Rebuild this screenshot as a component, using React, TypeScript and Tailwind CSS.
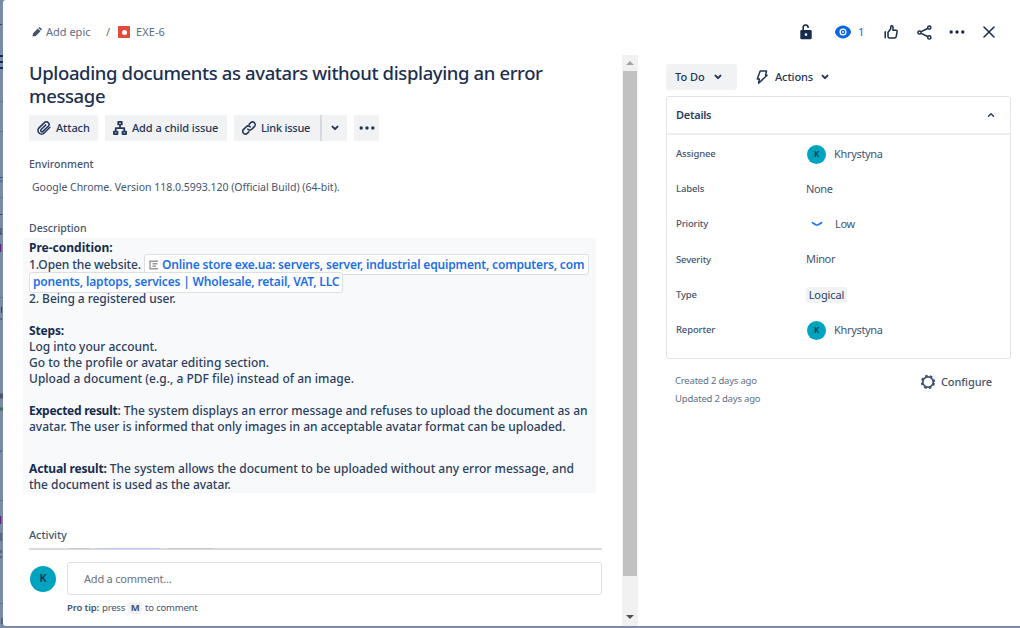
import React from 'react';

const Chevron = ({ className = '', up = false, w = 2 }: { className?: string; up?: boolean; w?: number }) => (
  <svg viewBox="0 0 8 6" className={`h-[6px] w-[8px] shrink-0 ${className}`} fill="none" stroke="currentColor" strokeWidth={w} strokeLinecap="round" strokeLinejoin="round">
    <path d={up ? 'M1.5 4.3 4 1.8 6.5 4.3' : 'M1.5 1.6 4 4.1 6.5 1.6'} />
  </svg>
);

const Dots = () => (
  <svg viewBox="0 0 16 4" className="h-[4px] w-[16px] shrink-0" fill="currentColor">
    <circle cx="2.2" cy="2" r="1.7" />
    <circle cx="8" cy="2" r="1.7" />
    <circle cx="13.8" cy="2" r="1.7" />
  </svg>
);

const Pencil = () => (
  <svg viewBox="0 0 10 10" className="h-[10px] w-[10px] shrink-0" fill="currentColor">
    <path d="M.4 9.6 1.1 6.2 5.8 1.5 8.5 4.2 3.8 8.900zM6.400 1 7 .5q.7-.6 1.300 0l1.200 1.200q.6.600 0 1.300l-.5.600z" />
  </svg>
);

const Clip = () => (
  <svg viewBox="0 0 14 14" className="h-[14px] w-[14px] shrink-0" fill="none" stroke="currentColor" strokeWidth="1.5" strokeLinecap="round">
    <path d="M12.900 6.300 7.200 12a3.600 3.600 0 0 1-5.200-5.100L7.400 1.600a2.600 2.600 0 0 1 3.800 3.700L6 10.400a1.300 1.300 0 0 1-1.900-1.900L8.600 4.100" />
  </svg>
);

const Tree = () => (
  <svg viewBox="0 0 14 14" className="h-[14px] w-[14px] shrink-0" fill="none" stroke="currentColor" strokeWidth="1.700" strokeLinejoin="round">
    <path d="M5.200.9h3.600v2.600H5.200zM.9 10.600h3.600v2.500H.9zM9.500 10.600h3.600v2.500H9.500zM7 3.500V7M2.700 10.600V7.200h8.600v3.400" />
  </svg>
);

const LinkIcon = () => (
  <svg viewBox="0 0 14 14" className="h-[14px] w-[14px] shrink-0" fill="none" stroke="currentColor" strokeWidth="1.600" strokeLinecap="round">
    <path d="M5.900 8.200a2.600 2.600 0 0 0 3.800.1l2.700-2.700a2.600 2.600 0 0 0-3.800-3.800L7.200 3.100M8.100 5.800a2.600 2.600 0 0 0-3.800-.1L1.600 8.400a2.600 2.600 0 0 0 3.800 3.800l1.400-1.300" />
  </svg>
);

const Lock = () => (
  <svg viewBox="0 0 12 16" className="h-[16px] w-[12px] shrink-0">
    <path d="M3.200 7V3.700a2.400 2.400 0 0 1 4.900-.5v.9" fill="none" stroke="currentColor" strokeWidth="1.600" />
    <path fill="currentColor" fillRule="evenodd" d="M1.500 6h9A1.200 1.200 0 0 1 11.700 7.200v6.900a1.200 1.200 0 0 1-1.200 1.200h-9A1.200 1.200 0 0 1 .3 14.100V7.200A1.200 1.200 0 0 1 1.500 6zM6 9.300a1.300 1.300 0 1 0 0 2.600 1.300 1.300 0 0 0 0-2.600z" />
  </svg>
);

const Eye = () => (
  <svg viewBox="0 0 16 14" className="h-[14px] w-[16px] shrink-0">
    <path fill="currentColor" d="M8 .6c4.600 0 8 4 8 6.400s-3.400 6.400-8 6.400S0 9.400 0 7 3.400.6 8 .6z" />
    <circle cx="8" cy="7" r="2.900" fill="none" stroke="#fff" strokeWidth="1.300" />
    <circle cx="8" cy="7" r="0.900" fill="#fff" />
  </svg>
);

const Thumb = () => (
  <svg viewBox="0 0 14 14" className="h-[14px] w-[14px] shrink-0" fill="none" stroke="currentColor" strokeWidth="1.500" strokeLinejoin="round" strokeLinecap="round">
    <path d="M1.200 6.800v6M4 7.200 6.700 4V2q0-1.200 1-1.200 1.300 0 1.300 1.500V5.200h2.800q1.500 0 1.300 1.400l-.9 4.900q-.3 1.400-1.600 1.400H5.300Q4 12.900 4 11.600z" />
  </svg>
);

const Share = () => (
  <svg viewBox="0 0 15 15" className="h-[15px] w-[15px] shrink-0" fill="none" stroke="currentColor" strokeWidth="1.500">
    <circle cx="2.500" cy="7.500" r="1.600" />
    <circle cx="12.300" cy="2.600" r="1.600" />
    <circle cx="12.300" cy="12.400" r="1.600" />
    <path d="m4.200 6.700 6.400-3.200M4.200 8.300l6.400 3.200" />
  </svg>
);

const Bolt = () => (
  <svg viewBox="0 0 12 14" className="h-[14px] w-[12px] shrink-0" fill="none" stroke="currentColor" strokeWidth="1.500" strokeLinejoin="round">
    <path d="M4.200 1h6.300L9.600 5.200h1.500L2.600 13.200l.8-4.200H1.300z" />
  </svg>
);

const Gear = () => (
  <svg viewBox="0 0 16 16" className="h-[16px] w-[16px] shrink-0" fill="none" stroke="currentColor">
    <circle cx="8" cy="8" r="5.200" strokeWidth="1.700" />
    <circle cx="8" cy="8" r="6.200" strokeWidth="1.900" strokeDasharray="2.600 2.270" strokeDashoffset="-1.130" />
  </svg>
);

const Avatar = ({ big = false }: { big?: boolean }) => (
  <div className={`flex shrink-0 items-center justify-center rounded-full bg-[#00a3bf] font-semibold text-[#172b4d] ${big ? 'h-[26px] w-[26px] text-[11px]' : 'h-[19px] w-[19px] text-[8px]'}`}>K</div>
);

const Field = ({ label, children }: { label: string; children: React.ReactNode }) => (
  <div className="flex h-[35.200px] items-center">
    <div className="w-[130px] text-[9.500px] font-medium tracking-[-0.15px] text-[#44546f]">{label}</div>
    <div className="flex items-center text-[11px] tracking-[-0.03em] text-[#44546f]">{children}</div>
  </div>
);

const Line = ({ className = '', children }: { className?: string; children?: React.ReactNode }) => (
  <div className={`h-[16px] leading-[16px] ${className}`}>{children}</div>
);

// Sliver of the dimmed board that stays visible beside the dialog.
const Backdrop = () => (
  <svg viewBox="0 0 3 628" className="h-[628px] w-[3px] shrink-0" fill="none">
    <path d="M0 101.500h3M0 131.500h3M0 197.500h3M0 297.500h3M0 500.500h3M0 603.500h3" stroke="#68778f" />
    <path d="M0 56h3M0 62h3M0 68h3" stroke="#172b4d" strokeWidth="1.800" />
    <path d="M0 177.500h2.500M0 181h2.500M0 451h2" stroke="#2d5590" />
    <path d="M0 24.500h2M0 214.500h2M1 228v6M0 234h2M1.500 307v6M0 319h2M1 533v8M1 550v3M0 557h2M2 618v6" stroke="#34435f" />
    <path d="M.5 244v8M.5 516v8" stroke="#65267f" strokeWidth="1.500" />
    <path d="M0 396h3" stroke="#4b5667" strokeWidth="5" />
    <path d="M0 409h3" stroke="#3c6f5c" strokeWidth="3" />
  </svg>
);

export default function App() {
  return (
    <div className="flex h-[628px] w-[1020px] overflow-hidden bg-[#7a8ba5] font-['Noto_Sans','Open_Sans',sans-serif] whitespace-nowrap text-[#172b4d]">
      <Backdrop />
      <div className="flex h-[626px] w-[1017px] flex-col rounded-l-[3px] bg-white">
        <header className="flex h-[55px] shrink-0 items-center justify-between pt-[9px] pr-[25px] pl-[29px] text-[11px] text-[#5e6c84]">
          <div className="flex items-center">
            <span className="text-[#44546f]"><Pencil /></span>
            <span className="ml-[4px] w-[60px]">Add epic</span>
            <span className="w-[12px]">/</span>
            <span className="flex h-[12px] w-[12px] items-center justify-center rounded-[1px] bg-[#e5493a]"><span className="h-[5px] w-[5px] rounded-full bg-white" /></span>
            <span className="ml-[6px] tracking-[0.1px]">EXE-6</span>
          </div>
          <div className="flex items-center text-[#172b4d]">
            <Lock />
            <span className="ml-[23px] flex items-center gap-[7px] text-[#0c66e4]"><Eye /><span className="w-[6px]">1</span></span>
            <span className="ml-[20px]"><Thumb /></span>
            <span className="ml-[19px]"><Share /></span>
            <span className="ml-[17px]"><Dots /></span>
            <svg viewBox="0 0 12 12" className="ml-[18px] h-[12px] w-[12px]" fill="none" stroke="currentColor" strokeWidth="1.500" strokeLinecap="round"><path d="m1 1 10 10M11 1 1 11" /></svg>
          </div>
        </header>
        <div className="flex h-[571px]">
          <main className="flex w-[619px] shrink-0 flex-col pl-[26px]">
            <h1 className="mt-[6px] text-[18.500px] leading-[23px] font-medium tracking-[-0.38px] text-[#1d3050]">
              <div>Uploading documents as avatars without displaying an error</div>
              <div>message</div>
            </h1>
            <div className="mt-[8px] flex h-[26px] text-[11px] font-medium tracking-[-0.08px] text-[#22365a]">
              <button className="flex w-[69px] items-center gap-[5px] rounded-[2px] bg-[#f1f2f4] pl-[8px]"><Clip />Attach</button>
              <button className="ml-[7px] flex w-[122px] items-center gap-[5px] rounded-[2px] bg-[#f1f2f4] pl-[8px]"><Tree />Add a child issue</button>
              <button className="ml-[7px] flex w-[86px] items-center gap-[5px] rounded-l-[2px] bg-[#f1f2f4] pl-[8px]"><LinkIcon /><span className="tracking-[-0.25px]">Link issue</span></button>
              <button className="flex w-[27px] items-center justify-center rounded-r-[2px] border-l-2 border-[#d5d9e0] bg-[#f1f2f4]"><Chevron /></button>
              <button className="ml-[7px] flex w-[25px] items-center justify-center rounded-[2px] bg-[#f1f2f4]"><Dots /></button>
            </div>
            <div className="mt-[15px] h-[16px] text-[10.500px] leading-[16px] font-medium text-[#44546f]">Environment</div>
            <div className="mt-[7px] h-[16px] pl-[3px] text-[10.500px] leading-[16px] tracking-[-0.02px] text-[#44546f]">Google Chrome. Version 118.0.5993.120 (Official Build) (64-bit).</div>
            <div className="mt-[25px] h-[16px] text-[10.500px] leading-[16px] font-medium text-[#44546f]">Description</div>
            <section className="mt-[2px] -ml-[6px] h-[255px] w-[573px] bg-[#f8f9fb] pt-[2px] pl-[6px] text-[12px] font-medium text-[#2c3e5d]">
              <Line className="font-bold text-[#172b4d]">Pre-condition:</Line>
              <div className="flex h-[17px] items-center">
                <span className="w-[115px] tracking-[-0.1px]">1.Open the website.</span>
                <a className="flex h-[21px] w-[445px] shrink-0 items-center rounded-[3px] border border-[#dcdfe4] bg-white pl-[4px] font-semibold tracking-[-0.17px] text-[#1d6fe8]">
                  <svg viewBox="0 0 10 10" className="mr-[3px] h-[10px] w-[10px] shrink-0" fill="none" stroke="#9a9a9a" strokeWidth="1.400"><path d="M9 1.200H1v7.600h8M3.500 3.800h5M3.500 6.300h3.500" /></svg>
                  Online store exe.ua: servers, server, industrial equipment, computers, com
                </a>
              </div>
              <div className="flex h-[18px] items-center">
                <a className="flex h-[21px] w-[314px] shrink-0 items-center rounded-[3px] border border-[#dcdfe4] bg-white pl-[3px] font-semibold tracking-[-0.17px] text-[#1d6fe8]">ponents, laptops, services | Wholesale, retail, VAT, LLC</a>
              </div>
              <Line className="tracking-[-0.05px]">2. Being a registered user.</Line>
              <Line className="mt-[16px] font-bold tracking-[-0.15px] text-[#172b4d]">Steps:</Line>
              <Line>Log into your account.</Line>
              <Line>Go to the profile or avatar editing section.</Line>
              <Line className="tracking-[0.02px]">Upload a document (e.g., a PDF file) instead of an image.</Line>
              <Line className="mt-[16px]"><b className="font-bold tracking-[-0.28px] text-[#172b4d]">Expected result</b>: The system displays an error message and refuses to upload the document as an</Line>
              <Line className="tracking-[-0.02px]">avatar. The user is informed that only images in an acceptable avatar format can be uploaded.</Line>
              <Line className="mt-[26px]"><b className="font-bold tracking-[-0.14px] text-[#172b4d]">Actual result:</b> The system allows the document to be uploaded without any error message, and</Line>
              <Line className="tracking-[-0.03px]">the document is used as the avatar.</Line>
            </section>
            <div className="mt-[34px] h-[16px] text-[11px] leading-[16px] font-medium tracking-[-0.1px] text-[#44546f]">Activity</div>
            <div className="mt-[5px] flex h-[2px] w-[573px] bg-[#d8dade] pl-[39px]">
              <div className="h-px w-[22px] bg-[#c6c9cf]" />
              <div className="ml-[7px] h-px w-[64px] bg-[#b9cdf0]" />
              <div className="ml-[7px] h-px w-[45px] bg-[#c6c9cf]" />
            </div>
            <div className="mt-[12px] flex items-center">
              <div className="ml-[1px]"><Avatar big /></div>
              <div className="ml-[11px] flex h-[33px] w-[535px] items-center rounded-[3px] border border-[#dfe1e6] pt-[2px] pl-[16px] text-[11px] tracking-[-0.2px] text-[#6b7280]">Add a comment...</div>
            </div>
            <div className="mt-[5px] flex h-[16px] items-center pl-[38px] text-[9.500px] tracking-[-0.1px] text-[#44546f]">
              <b className="font-semibold tracking-[-0.15px]">Pro tip:</b><span className="ml-[3px] tracking-[-0.2px]">press</span>
              <b className="mx-[3px] flex h-[12px] w-[14px] items-center justify-center rounded-[2px] bg-[#f1f2f4] font-bold">M</b><span className="tracking-[-0.2px]">to comment</span>
            </div>
          </main>
          <div className="flex h-[571px] w-[16px] shrink-0 flex-col items-center bg-[#f1f1f1]">
            <div className="flex h-[16px] shrink-0 items-center"><svg viewBox="0 0 8 4" className="h-[4px] w-[8px]" fill="#a3a3a3"><path d="M0 4 4 0l4 4z" /></svg></div>
            <div className="h-[505px] w-[14px] shrink-0 bg-[#c1c1c1]" />
            <div className="mt-[39px]"><svg viewBox="0 0 8 4" className="h-[4px] w-[8px]" fill="#505050"><path d="M0 0h8L4 4z" /></svg></div>
          </div>
          <aside className="flex w-[373px] flex-col pt-[9px] pl-[28px]">
            <div className="flex h-[26px] text-[11px] font-medium text-[#22365a]">
              <button className="flex w-[71px] items-center gap-[9px] rounded-[3px] bg-[#f1f2f4] pl-[9px]">To Do<Chevron /></button>
              <button className="ml-[19px] flex items-center"><Bolt /><span className="ml-[7px] tracking-[-0.1px]">Actions</span><Chevron className="ml-[8px]" /></button>
            </div>
            <section className="mt-[6px] h-[263px] w-[345px] rounded-[3px] border border-[#e2e4e9]">
              <div className="flex h-[38px] items-center justify-between border-b-2 border-[#eceef1] pr-[15px] pl-[9px] text-[11px] font-semibold tracking-[-0.25px] text-[#2c3e5d]">Details<Chevron up w={1.500} /></div>
              <div className="pt-[1.500px] pl-[9px]">
                <Field label="Assignee"><span className="mr-[8px] ml-[1px]"><Avatar /></span>Khrystyna</Field>
                <Field label="Labels">None</Field>
                <Field label="Priority"><svg viewBox="0 0 12 6" className="mr-[12px] ml-[5px] h-[6px] w-[12px]" fill="none" stroke="#1d6fff" strokeWidth="1.700" strokeLinecap="round"><path d="M1.500 1.700 4.800 3.700Q6 4.300 7.200 3.700L10.500 1.700" /></svg>Low</Field>
                <Field label="Severity">Minor</Field>
                <Field label="Type"><span className="flex h-[16px] w-[41px] items-center justify-center rounded-[2px] bg-[#f1f2f4] tracking-[-0.1px] text-[#2c3e5d]">Logical</span></Field>
                <Field label="Reporter"><span className="mr-[8px] ml-[1px]"><Avatar /></span>Khrystyna</Field>
              </div>
            </section>
            <div className="mt-[13px] flex w-[345px] justify-between pr-[19px] pl-[9px] text-[#44546f]">
              <div className="text-[9.500px] leading-[18px] tracking-[-0.2px] text-[#626f86]"><div>Created 2 days ago</div><div>Updated 2 days ago</div></div>
              <div className="flex h-[20px] items-center gap-[5px] text-[11px] font-medium tracking-[-0.1px]"><Gear />Configure</div>
            </div>
          </aside>
        </div>
      </div>
    </div>
  );
}
